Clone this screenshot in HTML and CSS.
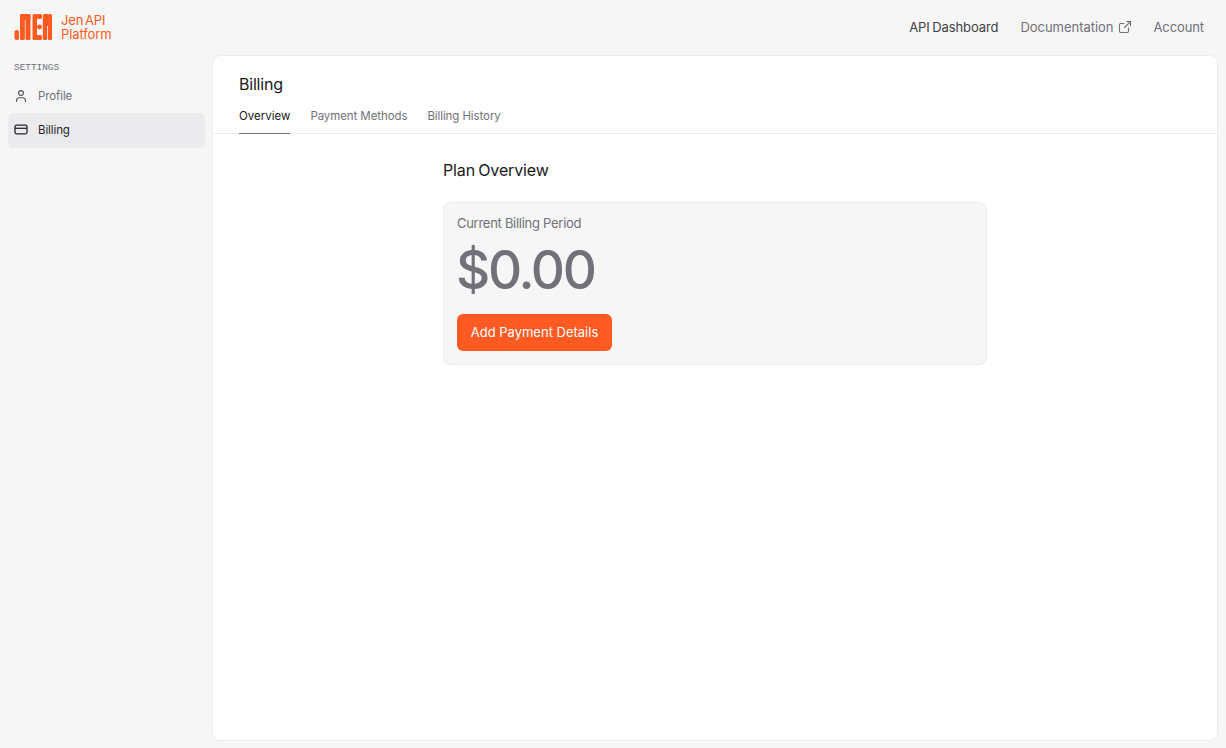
FILE: index.html
```html
<!DOCTYPE html>
<html lang="en">
<head>
<meta charset="utf-8">
<title>Billing</title>
<link rel="stylesheet" href="styles.css">
</head>
<body>
<header class="topbar">
  <div class="brand">
    <svg class="logo" width="38" height="26" viewBox="0 0 38 26" fill="#ff5a22">
      <rect x="0.500" y="16" width="4.500" height="10" rx="2"/>
      <rect x="6" y="0" width="4.800" height="26" rx="1.500"/>
      <rect x="6" y="0" width="10.500" height="6" rx="1.500"/>
      <rect x="11.500" y="0" width="5" height="26" rx="1.500"/>
      <rect x="18.500" y="0" width="4.500" height="26" rx="1.500"/>
      <rect x="22" y="0" width="6" height="5" rx="1.500"/>
      <circle cx="25.500" cy="13" r="2.400"/>
      <rect x="22" y="21" width="6" height="5" rx="1.500"/>
      <rect x="28.800" y="0" width="4.200" height="26" rx="1.500"/>
      <rect x="31" y="0" width="3" height="12"/>
      <rect x="33.800" y="0" width="4.200" height="26" rx="1.500"/>
    </svg>
    <div class="brand-name">Jen API<br>Platform</div>
  </div>
  <nav class="topnav">
    <a class="topnav-link topnav-current">API Dashboard</a>
    <a class="topnav-link topnav-docs">Documentation
      <svg class="ext-icon" width="14" height="14" viewBox="0 0 14 14" fill="none" stroke="#71717a" stroke-width="1.100" stroke-linecap="round" stroke-linejoin="round"><path d="M10.500 8v3.300a1.200 1.200 0 0 1-1.200 1.200H2.700a1.200 1.200 0 0 1-1.200-1.200V4.700a1.200 1.200 0 0 1 1.200-1.200H6"/><path d="M8.500 1.500h4v4"/><path d="M12.500 1.500 6.500 7.500"/></svg>
    </a>
    <a class="topnav-link">Account</a>
  </nav>
</header>
<div class="shell">
  <aside class="sidebar">
    <div class="side-label">SETTINGS</div>
    <a class="side-item">
      <svg width="14" height="14" viewBox="0 0 14 14" fill="none" stroke="#52525b" stroke-width="1.100" stroke-linecap="round"><circle cx="7" cy="4" r="2.400"/><path d="M2.500 12.500v-.8a3 3 0 0 1 3-3h3a3 3 0 0 1 3 3v.8"/></svg>
      Profile
    </a>
    <a class="side-item side-active">
      <svg width="14" height="14" viewBox="0 0 14 14" fill="none" stroke="#27272a" stroke-width="1.300" stroke-linejoin="round"><rect x="1" y="2.200" width="12" height="8.600" rx="1.500"/><path d="M1 5.300h12"/></svg>
      Billing
    </a>
  </aside>
  <main class="panel">
    <div class="panel-head">
      <h1 class="panel-title">Billing</h1>
      <div class="tabs">
        <a class="tab tab-active">Overview</a>
        <a class="tab">Payment Methods</a>
        <a class="tab">Billing History</a>
      </div>
    </div>
    <section class="content">
      <h2 class="section-title">Plan Overview</h2>
      <div class="plan-card">
        <div class="plan-label">Current Billing Period</div>
        <div class="plan-amount">$0.00</div>
        <button class="pay-btn">Add Payment Details</button>
      </div>
    </section>
  </main>
</div>
</body>
</html>
```
FILE: styles.css
```css
* { box-sizing: border-box; }
html, body { height: 100%; }
body {
  margin: 0;
  height: 748px;
  overflow: hidden;
  display: flex;
  flex-direction: column;
  background: #f6f6f6;
  font-family: Inter, "Liberation Sans", sans-serif;
  color: #18181b;
}
.topbar {
  height: 55px;
  flex: none;
  display: flex;
  justify-content: space-between;
  align-items: center;
  padding: 0 22px 1px 14px;
}
.brand { display: flex; align-items: center; gap: 9px; }
.logo { display: block; }
.brand-name { font-size: 13px; line-height: 13.500px; color: #ff5a22; letter-spacing: -0.100px; word-spacing: -2px; padding-top: 1px; }
.topnav { display: flex; align-items: center; gap: 21px; }
.topnav-link { display: flex; align-items: center; gap: 5px; font-size: 13px; color: #71717a; letter-spacing: -0.100px; }
.topnav-current { color: #3f3f46; word-spacing: -1px; margin-right: 1px; }
.topnav-docs { letter-spacing: -0.030px; }
.ext-icon { display: block; }
.shell { flex: 1; display: flex; padding: 0 8px 7px; min-height: 0; }
.sidebar { width: 204px; flex: none; padding-right: 7px; }
.side-label {
  font-family: "Liberation Mono", monospace;
  font-size: 9.400px;
  line-height: 12px;
  color: #71717a;
  padding: 7px 0 0 6px;
  margin-bottom: 4px;
}
.side-item {
  display: flex;
  align-items: center;
  gap: 10px;
  height: 35px;
  padding-left: 6px;
  font-size: 11.500px;
  letter-spacing: -0.100px;
  color: #71717a;
}
.side-active { background: #ebebed; border-radius: 6px; color: #27272a; padding-bottom: 1px; }
.panel {
  flex: 1;
  background: #fff;
  border: 1px solid #ececec;
  border-radius: 8px;
  min-width: 0;
}
.panel-head { border-bottom: 1px solid #ececec; padding: 18px 26px 0; height: 78px; }
.panel-title { margin: 0 0 13px; font-size: 16px; line-height: 20px; font-weight: 400; color: #18181b; letter-spacing: -0.200px; }
.tabs { display: flex; gap: 20px; }
.tab { font-size: 11.500px; line-height: 14px; height: 27px; padding-top: 2px; color: #71717a; letter-spacing: -0.090px; }
.tab-active { color: #18181b; border-bottom: 1px solid #71717a; letter-spacing: 0; }
.content { width: 544px; margin: 0 auto; padding-top: 26px; }
.section-title { margin: 0 0 22px; font-size: 16px; line-height: 20px; font-weight: 400; color: #18181b; letter-spacing: -0.150px; word-spacing: -1px; }
.plan-card {
  height: 163px;
  background: #f6f6f6;
  border: 1px solid #ececec;
  border-radius: 8px;
  padding: 12px 13px;
}
.plan-label { font-size: 13px; line-height: 16px; color: #71717a; letter-spacing: -0.280px; }
.plan-amount { font-size: 53px; font-weight: 500; line-height: 64px; margin: 7px 0 12px -1px; color: #71717a; letter-spacing: -2.300px; }
.pay-btn {
  display: block;
  width: 155px;
  height: 37px;
  border: 0;
  padding: 0 0 2px;
  border-radius: 6px;
  background: #ff5a22;
  color: #fff;
  font: inherit;
  font-size: 13px;
}
```
